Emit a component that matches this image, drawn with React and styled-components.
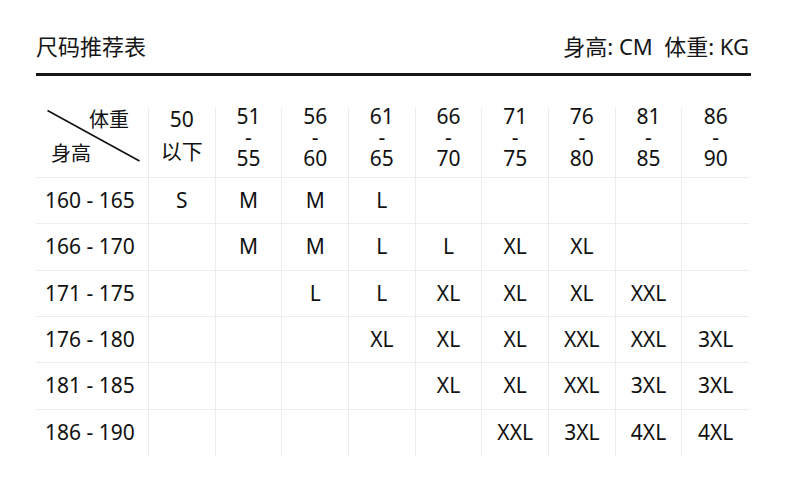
import React from 'react'
import styled, { createGlobalStyle } from 'styled-components'

const GlobalStyle = createGlobalStyle`
  html, body {
    margin: 0;
    background: #fff;
  }

  body {
    font-family: "Noto Sans", "Noto Sans CJK SC", sans-serif;
    color: #111;
  }
`

const Page = styled.div`
  width: 715px;
  padding: 31px 35px 0 36px;
`

const TopBar = styled.div`
  display: flex;
  justify-content: space-between;
  align-items: center;
  height: 30px;
  font-size: 22px;
  line-height: 30px;
  color: #161616;

  .units {
    padding-right: 2px;
  }
`

const Rule = styled.div`
  margin-top: 12px;
  height: 3px;
  background: #161616;
`

const Table = styled.div`
  display: grid;
  grid-template-columns: 113px repeat(9, 1fr);
  grid-template-rows: 70px repeat(6, 46.33px);
  width: 713px;
  margin-top: 32px;
  font-size: 21px;
`

const Cell = styled.div`
  display: flex;
  align-items: center;
  justify-content: ${p => (p.$left ? 'flex-start' : 'center')};
  padding-left: ${p => (p.$left ? '9px' : '0')};
  border-right: ${p => (p.$lastCol ? 'none' : '1px solid #ececec')};
  border-bottom: ${p => (p.$lastRow ? 'none' : '1px solid #ececec')};
  line-height: 1;
  white-space: pre;
`

const HeadCell = styled(Cell)`
  align-items: flex-start;
`

const HeadStack = styled.div`
  display: flex;
  flex-direction: column;
  align-items: center;
  margin-top: ${p => p.$shift}px;
  line-height: ${p => p.$lh}px;
`

const Corner = styled.div`
  position: relative;
  display: flex;
  flex-direction: column;
  justify-content: space-between;
  padding: 2px 19px 13px 15px;
  border-right: 1px solid #ececec;
  border-bottom: 1px solid #ececec;
  font-size: 20px;
  line-height: 20px;

  .weight {
    align-self: flex-end;
  }

  .height {
    align-self: flex-start;
  }

  svg {
    position: absolute;
    left: 0;
    top: 0;
  }
`

const weights = [
  ['50', '以下'],
  ['51', '-', '55'],
  ['56', '-', '60'],
  ['61', '-', '65'],
  ['66', '-', '70'],
  ['71', '-', '75'],
  ['76', '-', '80'],
  ['81', '-', '85'],
  ['86', '-', '90'],
]

const rows = [
  ['160 - 165', ['S', 'M', 'M', 'L', '', '', '', '', '']],
  ['166 - 170', ['', 'M', 'M', 'L', 'L', 'XL', 'XL', '', '']],
  ['171 - 175', ['', '', 'L', 'L', 'XL', 'XL', 'XL', 'XXL', '']],
  ['176 - 180', ['', '', '', 'XL', 'XL', 'XL', 'XXL', 'XXL', '3XL']],
  ['181 - 185', ['', '', '', '', 'XL', 'XL', 'XXL', '3XL', '3XL']],
  ['186 - 190', ['', '', '', '', '', 'XXL', '3XL', '4XL', '4XL']],
]

const App = () => {
  return (
    <>
      <GlobalStyle />
      <Page>
        <TopBar>
          <span>尺码推荐表</span>
          <span className="units">身高: CM&nbsp; 体重: KG</span>
        </TopBar>
        <Rule />
        <Table>
          <Corner>
            <svg width="113" height="70" viewBox="0 0 113 70">
              <line x1="11.5" y1="2.5" x2="103.5" y2="53" stroke="#111" strokeWidth="1.6" />
            </svg>
            <span className="weight">体重</span>
            <span className="height">身高</span>
          </Corner>
          {weights.map((w, i) => (
            <HeadCell key={i} $lastCol={i === weights.length - 1}>
              {w.length === 2
                ? <HeadStack $lh={32} $shift={-5}>{w.map((t, j) => <span key={j}>{t}</span>)}</HeadStack>
                : <HeadStack $lh={21} $shift={-2}>{w.map((t, j) => <span key={j}>{t}</span>)}</HeadStack>
              }
            </HeadCell>
          ))}
          {rows.map(([range, sizes], r) => (
            <React.Fragment key={range}>
              <Cell $left $lastRow={r === rows.length - 1}>{range}</Cell>
              {sizes.map((s, c) => (
                <Cell key={c} $lastCol={c === sizes.length - 1} $lastRow={r === rows.length - 1}>{s}</Cell>
              ))}
            </React.Fragment>
          ))}
        </Table>
      </Page>
    </>
  )
}

export default App
